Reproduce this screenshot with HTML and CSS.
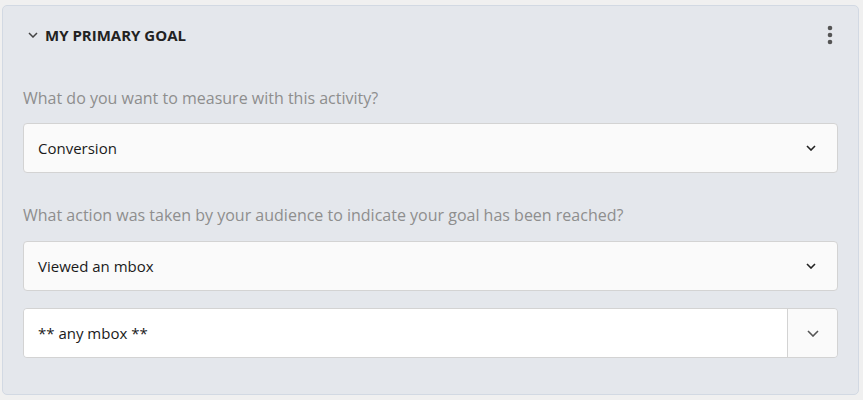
FILE: index.html
```html
<!DOCTYPE html>
<html>
<head>
<meta charset="utf-8">
<link rel="stylesheet" href="styles.css">
</head>
<body>
<section class="panel">
  <header class="panel-head">
    <div class="title">
      <svg class="caret" width="10" height="6" viewBox="0 0 10 6"><path d="M1 1l4 4 4-4" fill="none" stroke="#444" stroke-width="1.5"/></svg>
      <span>MY PRIMARY GOAL</span>
    </div>
    <svg class="kebab" width="6" height="20" viewBox="0 0 6 20"><circle cx="3" cy="3" r="2.3" fill="#555"/><circle cx="3" cy="10" r="2.3" fill="#555"/><circle cx="3" cy="17" r="2.3" fill="#555"/></svg>
  </header>
  <p class="label first">What do you want to measure with this activity?</p>
  <div class="select"><span>Conversion</span><svg width="10" height="6" viewBox="0 0 10 6"><path d="M1 1l4 4 4-4" fill="none" stroke="#222" stroke-width="1.6"/></svg></div>
  <p class="label">What action was taken by your audience to indicate your goal has been reached?</p>
  <div class="select"><span>Viewed an mbox</span><svg width="10" height="6" viewBox="0 0 10 6"><path d="M1 1l4 4 4-4" fill="none" stroke="#222" stroke-width="1.6"/></svg></div>
  <div class="combo">
    <div class="combo-input">** any mbox **</div>
    <div class="combo-btn"><svg width="12" height="7" viewBox="0 0 12 7"><path d="M1 1l5 5 5-5" fill="none" stroke="#555" stroke-width="1.6"/></svg></div>
  </div>
</section>
</body>
</html>
```
FILE: styles.css
```css
html, body { margin: 0; padding: 0; }
body {
  background: #f0f0f0;
  font-family: "Open Sans", "Liberation Sans", sans-serif;
  width: 863px;
  height: 400px;
  overflow: hidden;
}
.panel {
  box-sizing: border-box;
  margin: 5px 0 0 2px;
  width: 857px;
  height: 390px;
  background: #e4e7ec;
  border: 1px solid #d2d9e3;
  border-radius: 5px;
  padding: 0 20px;
}
.panel-head {
  display: flex;
  justify-content: space-between;
  align-items: center;
  height: 56px;
  padding-top: 2px;
  box-sizing: border-box;
}
.title {
  display: flex;
  align-items: center;
  gap: 7px;
  padding-left: 5px;
  font-weight: 700;
  font-size: 15px;
  color: #222;
}
.kebab { margin-right: 5px; }
.label {
  margin: 32px 0 16px;
  color: #8e8e8e;
  font-size: 16px;
  height: 20px;
  line-height: 20px;
}
.label.first { margin-top: 26px; margin-bottom: 15px; }
.select {
  height: 50px;
  box-sizing: border-box;
  border: 1px solid #d3d3d3;
  border-radius: 4px;
  background: #fafafa;
  display: flex;
  align-items: center;
  justify-content: space-between;
  padding: 0 21px 0 14px;
  font-size: 15px;
  color: #1a1a1a;
}
.combo {
  margin-top: 17px;
  height: 50px;
  display: flex;
  box-sizing: border-box;
  border: 1px solid #d3d3d3;
  border-radius: 4px;
  overflow: hidden;
  font-size: 15px;
  color: #1a1a1a;
}
.combo-input {
  flex: 1;
  background: #fff;
  display: flex;
  align-items: center;
  padding-left: 14px;
}
.combo-btn {
  width: 49px;
  border-left: 1px solid #d3d3d3;
  background: #fafafa;
  display: flex;
  align-items: center;
  justify-content: center;
}
```
